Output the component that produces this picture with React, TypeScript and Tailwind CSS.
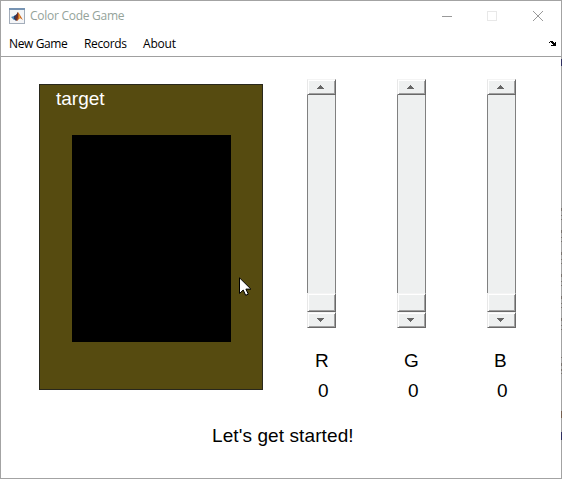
const labels = [
  { name: 'R', label: 'pl-[8px]', value: 'pl-[11px]' },
  { name: 'G', label: 'pl-[7px]', value: 'pl-[11px]' },
  { name: 'B', label: 'pl-[7px]', value: 'pl-[10px]' },
];

const raised =
  'border border-t-[#f4f4f4] border-l-[#e8e8e8] border-r-[#696969] border-b-[#696969] bg-[#eef0f0] shadow-[inset_1px_1px_0_#ffffff,inset_-1px_-1px_0_#a0a0a0]';

function Arrow({ down = false }: { down?: boolean }) {
  return (
    <svg width="7" height="4" viewBox="0 0 7 4" fill="#666" shapeRendering="crispEdges" className={down ? 'rotate-180' : ''}>
      <path d="M3 0h1v1h1v1h1v1h1v1H0V3h1V2h1V1h1z" />
    </svg>
  );
}

function Slider() {
  return (
    <div className="flex h-[249px] w-[29px] flex-col">
      <button className={'flex h-4 items-center pl-[9px] ' + raised}>
        <Arrow />
      </button>
      <div className="flex-1 border-x border-[#808080] bg-[#eef0f0]" />
      <div className={'h-[19px] ' + raised} />
      <button className={'flex h-4 items-center pl-[9px] ' + raised}>
        <Arrow down />
      </button>
    </div>
  );
}

function MatlabIcon() {
  return (
    <svg width="16" height="16" viewBox="0 0 16 16" className="shrink-0">
      <rect x=".5" y=".5" width="15" height="15" fill="#f4f5f7" stroke="#a3adba" />
      <path d="M0 0h16v2H0z" fill="#7794b3" />
      <path d="M2 9l3-1 3-2-1 4-2 2z" fill="#4c86ba" />
      <path d="M5 8l2-1 2-3v7l-2 2-2-2z" fill="#263d68" />
      <path d="M9 4l2 3 3 5-3-2-3 3-1-2z" fill="#ce6b20" />
      <path d="M9 4v5l-1 4-2-3z" fill="#6c2e27" />
      <path d="M10 5l1 5-1 1z" fill="#f0b44b" />
    </svg>
  );
}

export default function App() {
  return (
    <div className="relative flex h-[479px] w-[562px] flex-col border border-[#a3a3a3] bg-white font-['Liberation_Sans',Arial,sans-serif] text-[19px] leading-[22px] text-black">
      <header className="flex h-[29px] shrink-0 items-center pl-2 font-['Open_Sans',sans-serif] text-[12px]">
        <MatlabIcon />
        <span className="ml-[5px] w-[120px] whitespace-nowrap tracking-[-0.27px] text-[#94a39a]">Color Code Game</span>
        <svg width="104" height="12" viewBox="0 0 104 12" fill="none" className="mr-[17px] ml-auto" shapeRendering="crispEdges">
          <path d="M2 6.500h10" stroke="#999" />
          <path d="M47.500 1.500h9v9h-9z" stroke="#e8e8e8" />
          <path d="M93 1l10 10M103 1L93 11" stroke="#999" shapeRendering="auto" />
        </svg>
      </header>
      <nav className="flex h-[27px] shrink-0 items-center border-b border-[#a0a0a0] pt-[2px] pl-2 font-['Open_Sans',sans-serif] text-[12px]">
        <span className="w-[75px] whitespace-nowrap tracking-[-0.37px]">New Game</span>
        <span className="w-[59px] whitespace-nowrap tracking-[-0.37px]">Records</span>
        <span className="whitespace-nowrap tracking-[-0.2px]">About</span>
        <svg width="7" height="5" viewBox="0 0 7 5" className="mr-[5px] mb-[2px] ml-auto" shapeRendering="crispEdges">
          <path d="M1 0h3v1h1v1h1V1h1v4H2V4h2V3H3V2H2V1H1v1H0V1h1z" fill="black" />
        </svg>
      </nav>
      <main className="flex flex-1 flex-col">
        <div className="flex h-[348px] pl-[38px]">
          <section className="mt-[27px] h-[306px] w-[224px] shrink-0 border border-[#29281c] bg-[#564b10] pl-8">
            <h2 className="-ml-4 h-[50px] pt-[3px] text-white">target</h2>
            <div className="h-[207px] w-[159px] bg-black" />
          </section>
          <div className="ml-[44px] flex gap-[61px] pt-[22px]">
            {labels.map((c) => (
              <div key={c.name} className="w-[29px]">
                <Slider />
                <div className={'mt-[22px] ' + c.label}>{c.name}</div>
                <div className={'mt-2 ' + c.value}>0</div>
              </div>
            ))}
          </div>
        </div>
        <p className="mt-[20px] pl-[211px] tracking-[0.1px] whitespace-nowrap">Let's get started!</p>
      </main>
      <svg width="13" height="20" viewBox="0 0 13 20" className="absolute top-[276px] left-[238px]">
        <path d="M.5.8v15.700l3.700-3.500 2.500 5.300 2.600-1.200-2.400-5h5z" fill="white" stroke="black" />
      </svg>
      <svg width="1" height="479" viewBox="0 0 1 479" className="absolute -top-px -right-px" shapeRendering="crispEdges">
        <path d="M0 59h1v7H0zM0 432h1v8H0z" fill="#303060" />
        <path d="M0 411h1v7H0z" fill="#755f50" />
        <path d="M0 208h1v3H0zM0 215h1v1H0zM0 219h1v1H0zM0 230h1v3H0zM0 237h1v1H0zM0 241h1v1H0zM0 252h1v3H0zM0 259h1v1H0zM0 263h1v1H0zM0 274h1v3H0zM0 281h1v1H0zM0 285h1v1H0zM0 296h1v3H0zM0 303h1v1H0zM0 307h1v1H0zM0 318h1v3H0zM0 325h1v1H0zM0 329h1v1H0zM0 357h1v1H0zM0 363h1v3H0zM0 369h1v2H0zM0 373h1v1H0z" fill="#77716c" />
      </svg>
    </div>
  );
}
